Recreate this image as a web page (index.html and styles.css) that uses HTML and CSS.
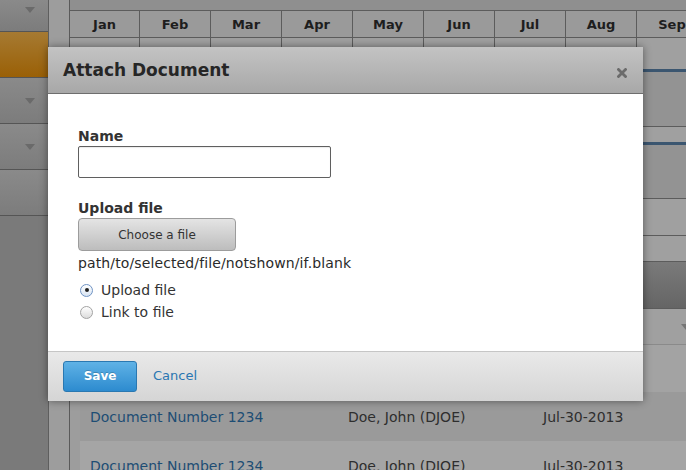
FILE: index.html
```html
<!DOCTYPE html>
<html>
<head>
<meta charset="utf-8">
<title>Attach Document</title>
<link rel="stylesheet" href="styles.css">
</head>
<body>
<div class="page">
  <aside class="sidebar">
    <div class="nav-item nav-first"><span class="caret"></span></div>
    <div class="nav-item nav-active"></div>
    <div class="nav-item"><span class="caret"></span></div>
    <div class="nav-item"><span class="caret"></span></div>
    <div class="nav-item"></div>
  </aside>
  <main class="main">
    <div class="content">
      <div class="strip-top"></div>
      <div class="months">
        <div class="mcell">Jan</div><div class="mcell">Feb</div><div class="mcell">Mar</div>
        <div class="mcell">Apr</div><div class="mcell">May</div><div class="mcell">Jun</div>
        <div class="mcell">Jul</div><div class="mcell">Aug</div><div class="mcell">Sep</div>
      </div>
      <div class="months months-body">
        <div class="mcell"></div><div class="mcell"></div><div class="mcell"></div>
        <div class="mcell"></div><div class="mcell"></div><div class="mcell"></div>
        <div class="mcell"></div><div class="mcell"></div><div class="mcell"></div>
      </div>
      <div class="band-blue"></div>
      <div class="band band-dark b54"></div>
      <div class="band band-light b15 no-line"></div>
      <div class="band-blue"></div>
      <div class="band band-dark b53"></div>
      <div class="band band-light b36"></div>
      <div class="band band-light b25"></div>
      <div class="band band-head"></div>
      <div class="band band-light b35 band-soft"><span class="caret caret-right"></span></div>
      <div class="band band-light b47 no-line"></div>
      <div class="docs">
        <div class="doc-row doc-row-alt">
          <a class="doc-link">Document Number 1234</a>
          <span class="doc-cell">Doe, John (DJOE)</span>
          <span class="doc-cell">Jul-30-2013</span>
        </div>
        <div class="doc-row">
          <a class="doc-link">Document Number 1234</a>
          <span class="doc-cell">Doe, John (DJOE)</span>
          <span class="doc-cell">Jul-30-2013</span>
        </div>
      </div>
    </div>
  </main>
</div>

<div class="modal">
  <div class="modal-header">
    <h1 class="modal-title">Attach Document</h1>
    <svg class="modal-close" width="10" height="10" viewBox="0 0 10 10" aria-label="Close">
      <path d="M1.5 1.5 L8.5 8.5 M8.5 1.5 L1.5 8.5" stroke="#6b6b6b" stroke-width="2.8" stroke-linecap="square"/>
    </svg>
  </div>
  <div class="modal-body">
    <label class="field-label">Name</label>
    <input class="text-input" type="text">
    <label class="field-label field-label-gap">Upload file</label>
    <button class="file-btn" type="button">Choose a file</button>
    <div class="file-path">path/to/selected/file/notshown/if.blank</div>
    <div class="radios">
      <div class="radio-row"><span class="radio radio-on"></span><span>Upload file</span></div>
      <div class="radio-row"><span class="radio"></span><span>Link to file</span></div>
    </div>
  </div>
  <div class="modal-footer">
    <button class="btn-save" type="button">Save</button>
    <a class="btn-cancel">Cancel</a>
  </div>
</div>
</body>
</html>
```

FILE: styles.css
```css
* { box-sizing: border-box; }
html, body { margin: 0; padding: 0; }
body {
  width: 686px;
  height: 470px;
  overflow: hidden;
  font-family: "DejaVu Sans", Verdana, sans-serif;
  background: #9d9d9d;
}
.page {
  display: flex;
  height: 470px;
}

/* sidebar */
.sidebar {
  width: 49px;
  flex: none;
  background: #7a7a7a;
  border-right: 1px solid #5e5e5e;
  display: flex;
  flex-direction: column;
}
.nav-item {
  height: 46px;
  border-bottom: 1px solid #555;
  background: linear-gradient(#8a8a8a, #7c7c7c);
  display: flex;
  align-items: center;
  justify-content: flex-end;
  padding-right: 13px;
}
.nav-first {
  height: 32px;
  align-items: flex-start;
  padding-top: 7px;
}
.nav-active {
  background: linear-gradient(#a67a32, #9a6006);
}
.caret {
  width: 0;
  height: 0;
  border-left: 5px solid transparent;
  border-right: 5px solid transparent;
  border-top: 6px solid #6a6a6a;
}

/* main area */
.main {
  flex: 1;
  min-width: 0;
  padding-left: 20px;
  overflow: hidden;
}
.content {
  border-left: 1px solid #5a5a5a;
  width: 700px;
  height: 470px;
}
.strip-top {
  height: 11px;
  background: #8f8f8f;
  border-bottom: 1px solid #5c5c5c;
}
.months {
  display: grid;
  grid-template-columns: 70px repeat(8, 71px);
  height: 27px;
  background: #9a9a9a;
  border-bottom: 1px solid #5c5c5c;
}
.mcell {
  border-right: 1px solid #5c5c5c;
  display: flex;
  align-items: center;
  justify-content: center;
  padding-top: 1px;
  font-weight: bold;
  font-size: 13px;
  color: #1e1e1e;
}
.months-body {
  height: 31px;
  background: #a0a0a0;
  border-bottom: none;
}
.band-blue {
  height: 3px;
  background: #3b5670;
}
.band {
  border-bottom: 1px solid #5c5c5c;
}
.no-line { border-bottom: none; }
.band-dark { background: #939393; }
.band-light { background: #a0a0a0; }
.band-soft { border-bottom-color: #8a8a8a; }
.b54 { height: 55px; }
.b15 { height: 15px; }
.b53 { height: 54px; }
.b36 { height: 37px; }
.b25 { height: 26px; }
.b35 { height: 36px; }
.b47 { height: 47px; background: #a3a3a3; }
.band-head {
  height: 47px;
  background: linear-gradient(#7a7a7a, #656565);
}
.band-soft {
  display: flex;
  align-items: center;
  padding-left: 611px;
}
.caret-right { border-top-color: #767676; }

/* documents list */
.docs {
  margin-left: 10px;
}
.doc-row {
  display: grid;
  grid-template-columns: 258px 195px 1fr;
  align-items: center;
  height: 49px;
  padding-left: 10px;
  background: #a5a5a5;
  font-size: 14px;
}
.doc-row-alt { background: #9a9a9a; }
.doc-link { color: #1d4d74; }
.doc-cell { color: #2e2e2e; }

/* modal */
.modal {
  position: absolute;
  left: 48px;
  top: 47px;
  width: 595px;
  height: 354px;
  background: #fff;
  box-shadow: 0 0 8px rgba(0, 0, 0, 0.45);
  display: flex;
  flex-direction: column;
}
.modal-header {
  height: 47px;
  flex: none;
  background: linear-gradient(#c3c3c3, #a8a8a8);
  border-bottom: 1px solid #6e6e6e;
  display: flex;
  align-items: center;
  justify-content: space-between;
  padding: 0 16px 0 15px;
}
.modal-title {
  margin: 0;
  font-size: 17px;
  line-height: 20px;
  font-weight: bold;
  color: #262626;
}
.modal-close {
  margin-top: 5px;
}
.modal-body {
  height: 257px;
  flex: none;
  padding: 34px 30px 0 30px;
  display: flex;
  flex-direction: column;
  align-items: flex-start;
}
.field-label {
  font-size: 14px;
  line-height: 17px;
  font-weight: bold;
  color: #333;
}
.field-label-gap { margin-top: 22px; }
.text-input {
  margin: 1px 0 0 0;
  width: 253px;
  height: 32px;
  border: 1px solid #5f5f5f;
  border-radius: 2px;
  background: #fff;
  box-shadow: inset 0 1px 1px rgba(0,0,0,0.08);
  font-family: inherit;
  font-size: 14px;
  padding: 0 6px;
}
.file-btn {
  margin: 1px 0 0 0;
  width: 158px;
  height: 33px;
  border: 1px solid #9c9c9c;
  border-radius: 4px;
  background: linear-gradient(#e4e4e4, #bdbdbd);
  font-family: inherit;
  font-size: 12px;
  color: #333;
  padding: 0;
}
.file-path {
  margin-top: 4px;
  font-size: 14px;
  letter-spacing: 0.12px;
  line-height: 17px;
  color: #2a2a2a;
}
.radios {
  margin-top: 7px;
  display: flex;
  flex-direction: column;
}
.radio-row {
  height: 22px;
  display: flex;
  align-items: center;
  gap: 8px;
  padding-left: 2px;
  font-size: 14px;
  color: #333;
}
.radio {
  width: 13px;
  height: 13px;
  border-radius: 50%;
  border: 1px solid #a3a3a3;
  background: linear-gradient(#ffffff, #dcdcdc);
  display: flex;
  align-items: center;
  justify-content: center;
}
.radio-on {
  border-color: #6f93c4;
  background: linear-gradient(#ffffff, #d8e4f2);
}
.radio-on::after {
  content: "";
  width: 4px;
  height: 4px;
  border-radius: 50%;
  background: #1f1f1f;
}
.modal-footer {
  height: 50px;
  flex: none;
  border-top: 1px solid #c6c6c6;
  background: linear-gradient(#e9e9e9, #d5d5d5);
  padding: 9px 15px 0 15px;
  display: flex;
  align-items: flex-start;
  gap: 16px;
}
.btn-save {
  width: 74px;
  height: 31px;
  border: 1px solid #2a78b1;
  border-radius: 3px;
  background: linear-gradient(#5fb2e6, #2d8bcf);
  color: #fff;
  font-family: inherit;
  font-weight: bold;
  font-size: 12px;
  text-shadow: 0 -1px 0 rgba(0,0,0,0.2);
  padding: 0 0 2px 0;
}
.btn-cancel {
  font-size: 13px;
  line-height: 30px;
  color: #2a76b2;
}
```
